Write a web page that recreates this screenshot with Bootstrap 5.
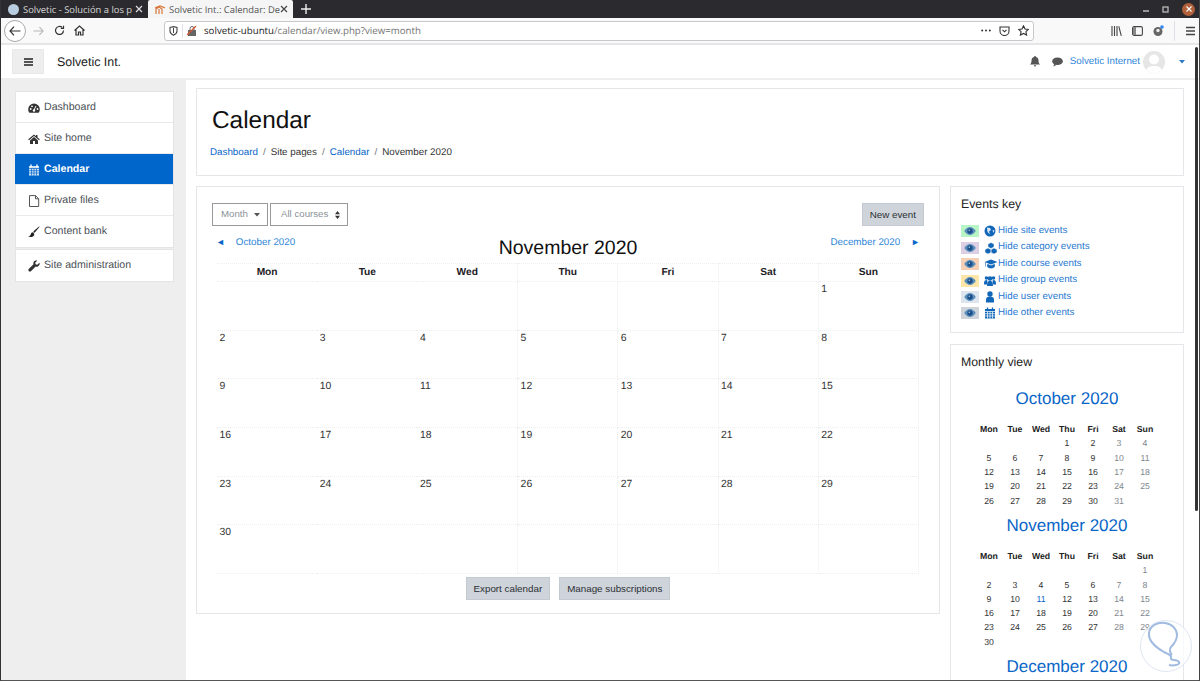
<!DOCTYPE html>
<html lang="en"><head><meta charset="utf-8"><title>Calendar</title>
<link rel="stylesheet" href="https://cdn.jsdelivr.net/npm/bootstrap@5.3.0/dist/css/bootstrap.min.css">
<style>
html,body{height:100%;overflow:hidden}
body{font-family:"Liberation Sans",Arial,sans-serif;font-size:10.6px;color:#1d2125;background:#fff;border-left:1px solid #333;border-bottom:1px solid #555;text-rendering:geometricPrecision}
a{color:#0a66c8;text-decoration:none}
.tabbar{height:18px;background:#2b2a2e;color:#d8d8d8;font:9.4px "Open Sans",sans-serif}
.tabx{width:147px;height:18px;padding:0 5px 0 7px}
.tabx.on{width:145px;background:#f5f5f6;color:#555;border-radius:2px 2px 0 0}
.tabx .ttl{flex:1;overflow:hidden;white-space:nowrap;margin-left:4px}
.globe{width:11px;height:11px;border-radius:50%;background:#b9cde0;flex:none}
.winctl{margin-left:auto;gap:13px;padding-right:5px}
.closer{width:13px;height:13px;border-radius:50%;background:#b0603a;color:#fff}
.toolb{height:27px;background:#f9f9fa;border-bottom:2px solid #e6e6e8;padding:0 4px 0 3px}
.backb{width:22px;height:22px;border:1px solid #aaa;border-radius:50%;background:#fff;flex:none}
.urlb{width:870px;height:20px;margin-left:79px;background:#fff;border:1px solid #c8c8ca;border-radius:3px;font:9.7px "Open Sans",sans-serif;color:#737373;padding:0 4px}
.urlb b{font-weight:500;color:#222}
.topnav{height:35px;background:#fff;border-bottom:2px solid #eee;padding-left:11px;padding-right:15px}
.burger{width:32px;height:25px;background:#eee;border:1px solid #e8e8ec}
.brandx{font-size:12.4px;margin-left:13px;color:#222;padding-top:2px}
.userlink{color:#2f86d8;font-size:9.8px;padding-top:1px}
.avatarx{width:22px;height:22px;border-radius:50%;background:#e6e6e6;margin:0 14px 0 3px;overflow:hidden}
.pagebody{height:636px}
.side{width:185px;flex:none;background:#eee;padding:11px 12px 0 14px}
.menuc{background:#fff;border:1px solid #e4e4e4}
.menuc+.menuc{margin-top:1px}
.menuc a{display:flex;align-items:center;height:31px;padding:1px 0 0 12px;color:#4a4f55;border-bottom:1px solid #eaeaea}
.menuc a:last-child{border-bottom:0;padding-bottom:1px}
.menuc a.on{background:#0066cc;color:#fff;font-weight:700;margin-left:-1px;padding-left:13px}
.menuc svg{width:12px;height:12px;margin-right:4px;flex:none}
.mainarea{flex:1;padding:8px 16px 0 10px;min-width:0}
.boxc{background:#fff;border:1px solid #e4e6e9}
.headc{height:88px;padding:17px 13px 0;margin-bottom:10px}
.headc h1{font-size:24.4px;line-height:29px;font-weight:400;margin:0 0 0 2px;color:#111}
.crumbs{margin-top:11px;font-size:9.8px;line-height:14px;color:#333}
.crumbs i{font-style:normal;color:#6c757d;margin:0 5px}
.colsx{gap:10px;align-items:flex-start}
.calc{width:744px;height:428px;padding:16px 15px 0 15px;flex:none}
.selx{height:23px;border:1px solid #999;color:#8b9298;background:#fff;padding:0 7px 0 8px;margin-right:2px;font-size:9.7px;border-radius:0}
.btnx{background:#ced4da;color:#2b2f33;border:0;border-radius:0;font-size:9.8px;padding:0 8px;height:23px;line-height:23px;box-shadow:inset 0 0 0 1px #c3cad1}
.navrow{height:37px}
.navrow a{font-size:9.8px;margin-top:10px;color:#2f86d8;flex:0 0 200px}
.navrow h2{flex:1;text-align:center;font-size:19.5px;font-weight:400;margin:10px 0 0;line-height:25px;color:#111}
.tri{color:#0a66c8;font-size:9px}
table.gridx{width:702px;margin-left:5px;table-layout:fixed;border-collapse:collapse}
table.gridx th{height:18px;text-align:center;font-size:10.2px;border:1px dotted #eceef0;padding:0;color:#1d2125}
table.gridx td{height:48.7px;vertical-align:top;padding:1px 2.5px 0;border:1px dotted #eceef0;font-size:10.4px;line-height:14px;color:#333}
table.gridx th:nth-child(-n+3),table.gridx td:nth-child(-n+3){border-left:0;border-right:0}
.footb{gap:9px;margin-top:3px}
.sidec{width:234px;flex:none}
.keyc{height:147px;padding:9px 10px 0;margin-bottom:11px}
.keyc h5,.monc h5{font-size:12.3px;font-weight:400;line-height:16px;margin:0;color:#222}
.keyrow{height:16.45px;display:flex;align-items:center;font-size:9.75px}
.keyrow a{color:#1f78d1}
.swat{width:18px;height:12px;display:flex;align-items:center;justify-content:center;margin-right:5px;flex:none}
.icbox{width:14px;flex:none;display:flex;align-items:center}
.icbox svg{width:12px;height:12px}
.icbox svg.wide{width:14px}
.monc{height:400px;padding:9px 10px 0;overflow:hidden}
.monc .mt{font-size:17px;line-height:20px;text-align:center;color:#0a66c8;margin:0;font-weight:400;width:212px}
table.minix{width:182px;margin-left:15px;table-layout:fixed;border-collapse:collapse;margin-top:13px;margin-bottom:8px}
table.minix th,table.minix td{height:14.3px;padding:0;text-align:center;font-size:8.7px;line-height:14px;color:#333}
table.minix th{font-weight:700;color:#222}
table.minix td.we{color:#7f878e}
table.minix td.ev{color:#0a66c8}
.sbar{position:absolute;left:1195px;top:47px;width:3px;height:464px;background:#333;border-radius:2px}
.rimr{position:absolute;right:0;top:0;width:1px;height:681px;background:#444}
.wmark{position:absolute;left:1139px;top:619px;width:54px;height:54px}
</style></head><body>

<svg width="0" height="0" class="position-absolute"><defs>
<symbol id="eyeg" viewBox="0 0 12 8"><path d="M.2 4C2 1.300 4 0 6 0s4 1.300 5.800 4C10 6.700 8 8 6 8S2 6.700.2 4z" fill="#5a8fbd"/><circle cx="6" cy="4" r="2.700" fill="#1d4f88"/><circle cx="5.300" cy="3.300" r=".8" fill="#a9cbe6"/></symbol>
</defs></svg>

<div class="tabbar d-flex align-items-center">
  <div class="tabx d-flex align-items-center"><span class="globe"></span><span class="ttl">Solvetic - Solución a los p</span><svg width="8" height="8" viewBox="0 0 8 8"><path d="M1 1l6 6M7 1L1 7" stroke="#ddd" stroke-width="1.2"/></svg></div>
  <div class="tabx on d-flex align-items-center"><svg width="10" height="9" viewBox="0 0 10 9"><path d="M1 9V4l3-2 3 2v5M4 9V4M0 3l5-2 5 2" fill="none" stroke="#d9773a" stroke-width="1.2"/></svg><span class="ttl">Solvetic Int.: Calendar: De</span><svg width="8" height="8" viewBox="0 0 8 8"><path d="M1 1l6 6M7 1L1 7" stroke="#444" stroke-width="1.2"/></svg></div>
  <svg class="ms-2" width="10" height="10" viewBox="0 0 10 10"><path d="M5 0v10M0 5h10" stroke="#eee" stroke-width="1.4"/></svg>
  <div class="winctl d-flex align-items-center">
    <svg width="6" height="6" viewBox="0 0 6 6"><path d="M0 5h6" stroke="#bbb" stroke-width="1.5"/></svg>
    <svg width="7" height="7" viewBox="0 0 7 7"><rect x="1" y="1" width="5" height="5" fill="none" stroke="#bbb" stroke-width="1.3"/></svg>
    <span class="closer d-flex align-items-center justify-content-center"><svg width="6" height="6" viewBox="0 0 6 6"><path d="M.5.5l5 5M5.500.5l-5 5" stroke="#fff" stroke-width="1.1"/></svg></span>
  </div>
</div>

<div class="toolb d-flex align-items-center">
  <span class="backb d-flex align-items-center justify-content-center"><svg width="12" height="10" viewBox="0 0 12 10"><path d="M5 .7L1 5l4 4.300M1 5h10.500" fill="none" stroke="#333" stroke-width="1.2"/></svg></span>
  <svg style="margin-left:7px" width="11" height="10" viewBox="0 0 12 10"><path d="M7 .7L11 5 7 9.300M11 5H.5" fill="none" stroke="#b5b5b5" stroke-width="1.2"/></svg>
  <svg style="margin-left:10px" width="11" height="11" viewBox="0 0 11 11"><path d="M9.500 5.500a4 4 0 1 1-1.200-2.900M9.500 .8v2.700H6.800" fill="none" stroke="#333" stroke-width="1.2"/></svg>
  <svg style="margin-left:9px" width="11" height="11" viewBox="0 0 11 11"><path d="M.5 5.500l5-4.500 5 4.500M2 4.500V10h2.500V7h2v3H9V4.500" fill="none" stroke="#333" stroke-width="1.2"/></svg>
  <div class="urlb d-flex align-items-center">
    <svg width="9" height="10" viewBox="0 0 9 10"><path d="M1 1.500L4.500.6 8 1.500v3.500c0 2-1.500 3.400-3.500 4.300C2.500 8.400 1 7 1 5z" fill="none" stroke="#444" stroke-width="1.100"/><path d="M4.500 2v5" stroke="#444"/></svg>
    <span class="border-start" style="height:14px;margin:0 4px"></span>
    <svg width="10" height="10" viewBox="0 0 10 10"><rect x="1" y="4" width="8" height="6" fill="#666"/><path d="M3 4V2.500a2 2 0 0 1 4 0V4" fill="none" stroke="#666"/><path d="M0 9L9 0" stroke="#d9552b" stroke-width="1.300"/></svg>
    <span style="margin-left:7px"><b>solvetic-ubuntu</b>/calendar/view.php?view=month</span>
    <span class="ms-auto d-flex align-items-center gap-2">
      <svg width="10" height="3" viewBox="0 0 10 3"><g fill="#333"><circle cx="1.200" cy="1.500" r="1"/><circle cx="5" cy="1.500" r="1"/><circle cx="8.800" cy="1.500" r="1"/></g></svg>
      <svg width="11" height="10" viewBox="0 0 11 10"><path d="M1 1h9v4a4.500 4.500 0 0 1-9 0zM3.500 3.800l2 2 2-2" fill="none" stroke="#333" stroke-width="1.100"/></svg>
      <svg width="11" height="11" viewBox="0 0 11 11"><path d="M5.500.8l1.500 3.200 3.400.4-2.500 2.300.7 3.400-3.100-1.700-3.100 1.700.7-3.400L.6 4.400 4 4z" fill="none" stroke="#333" stroke-width="1.100"/></svg>
    </span>
  </div>
  <div class="ms-auto d-flex align-items-center" style="gap:10px">
    <svg width="11" height="10" viewBox="0 0 11 10"><path d="M1 0v10M3.500 0v10M6 0v10M7.800.3l2.500 9.500" stroke="#444" stroke-width="1.100"/></svg>
    <svg width="11" height="10" viewBox="0 0 11 10"><rect x=".6" y=".6" width="9.800" height="8.800" rx="1.500" fill="none" stroke="#444" stroke-width="1.100"/><rect x="1" y="1" width="3" height="8" fill="#888"/></svg>
    <svg width="11" height="12" viewBox="0 0 11 12"><circle cx="5" cy="6.500" r="4.500" fill="#666"/><circle cx="5" cy="5.500" r="1.700" fill="#eee"/><circle cx="9" cy="2" r="1.800" fill="#2f86f0"/></svg>
    <span class="border-start" style="height:20px"></span>
    <svg width="11" height="10" viewBox="0 0 11 10"><path d="M1 1.500h9M1 5h9M1 8.500h9" stroke="#444" stroke-width="1.300"/></svg>
  </div>
</div>

<nav class="topnav d-flex align-items-center">
  <span class="burger d-flex align-items-center justify-content-center"><svg width="9" height="8" viewBox="0 0 9 8"><path d="M0 1h9M0 4h9M0 7h9" stroke="#222" stroke-width="1.400"/></svg></span>
  <span class="brandx">Solvetic Int.</span>
  <span class="ms-auto d-flex align-items-center">
    <svg width="10" height="11" viewBox="0 0 10 11"><path d="M5 0a1 1 0 0 1 1 1c2 .5 2.500 2 2.500 3.500 0 2 .5 3 1.500 4H0c1-1 1.500-2 1.500-4C1.500 3 2 1.500 4 1a1 1 0 0 1 1-1zM3.800 9.300h2.400a1.200 1.200 0 0 1-2.400 0z" fill="#555"/></svg>
    <svg style="margin-left:12px" width="11" height="10" viewBox="0 0 11 10"><ellipse cx="5.500" cy="4.300" rx="5.300" ry="3.800" fill="#555"/><path d="M2 7l-.5 2.500L5 7.800z" fill="#555"/></svg>
    <a class="userlink" href="#" style="margin-left:7px">Solvetic Internet</a>
    <span class="avatarx"><svg width="22" height="22" viewBox="0 0 22 22"><circle cx="11" cy="8.500" r="5" fill="#fff"/><path d="M2 24c0-7 4-9 9-9s9 2 9 9z" fill="#fff"/></svg></span>
    <svg width="6" height="4" viewBox="0 0 6 4"><path d="M0 0h6L3 3.500z" fill="#2f78c8"/></svg>
  </span>
</nav>

<div class="pagebody d-flex">
  <aside class="side">
    <div class="menuc">
      <a href="#"><svg viewBox="0 0 12 12"><path d="M6 1.500a5.800 5.800 0 0 0-5.800 5.700c0 1.500.5 2.800 1.300 3.600h9c.8-.8 1.300-2.100 1.300-3.600A5.800 5.800 0 0 0 6 1.500z" fill="#333"/><path d="M6 8L8 4" stroke="#fff"/><g fill="#fff"><circle cx="2.700" cy="7" r=".9"/><circle cx="4" cy="4.300" r=".9"/><circle cx="9.500" cy="7" r=".9"/><circle cx="6" cy="8.500" r="1.200"/></g></svg>Dashboard</a>
      <a href="#"><svg viewBox="0 0 12 12"><path d="M6 1.500L.2 6.300l.8.900L6 3.100l5 4.100.8-.9-2.300-1.900V2H8v1.200zM2 7.500V11h3V8h2v3h3V7.500L6 4z" fill="#333"/></svg>Site home</a>
      <a href="#" class="on"><svg viewBox="0 0 12 12"><path d="M1 2h10v9.500H1z" fill="#cfe2f5"/><path d="M3 .5v2.800M9 .5v2.800" stroke="#fff" stroke-width="1.400"/><path d="M1 4.500h10M1 6.700h10M1 9h10M3.500 4.500v7M6 4.500v7M8.500 4.500v7" stroke="#0066cc" stroke-width=".7"/></svg>Calendar</a>
      <a href="#"><svg viewBox="0 0 12 12"><path d="M1.500.6h6L10.700 3.800v7.700H1.500zM7.500.6v3.200h3.200" fill="none" stroke="#555" stroke-width="1"/></svg>Private files</a>
      <a href="#"><svg viewBox="0 0 12 12"><path d="M11.800.3c-1.200.5-5.300 4-6.600 5.600l1.100 1.100C7.700 5.700 11.300 1.500 11.800.3zM4.500 6.200C2.800 6.500 3 8.500 2.300 9.300 1.800 10 .8 10 .2 10.300c1.800 1.300 5 1.200 6-1.300.4-1.100-.5-2.300-1.700-2.800z" fill="#222"/></svg>Content bank</a>
    </div>
    <div class="menuc">
      <a href="#"><svg viewBox="0 0 12 12"><path d="M11.300 2.800L9.300 4.700 7.600 4.300 7.200 2.700 9.200.7C7.700.2 6 .8 5.500 2.200c-.3.800-.2 1.500 0 2.100L.7 9.100c-.5.500-.5 1.300 0 1.800l.4.400c.5.500 1.300.5 1.800 0l4.800-4.800c.6.200 1.400.3 2.100 0 1.500-.5 2.200-2.200 1.700-3.700z" fill="#333"/></svg>Site administration</a>
    </div>
  </aside>

  <main class="mainarea">
    <div class="boxc headc">
      <h1>Calendar</h1>
      <div class="crumbs"><a href="#">Dashboard</a><i>/</i>Site pages<i>/</i><a href="#">Calendar</a><i>/</i>November 2020</div>
    </div>
    <div class="colsx d-flex">
      <section class="boxc calc">
        <div class="d-flex">
          <button class="selx d-flex align-items-center" type="button">Month<svg style="margin-left:6px" width="6" height="4" viewBox="0 0 6 4"><path d="M0 0h6L3 3.500z" fill="#555"/></svg></button>
          <button class="selx d-flex align-items-center" type="button" style="padding-left:10px">All courses<svg style="margin-left:7px" width="5" height="8" viewBox="0 0 5 8"><path d="M0 3.300h5L2.500 0zM0 4.700h5L2.500 8z" fill="#333"/></svg></button>
          <button class="btnx ms-auto" type="button">New event</button>
        </div>
        <div class="navrow d-flex align-items-start">
          <a href="#" class="ps-1"><span class="tri">◄</span>&nbsp;&nbsp;&nbsp;&nbsp;October 2020</a>
          <h2>November 2020</h2>
          <a href="#" class="pe-1 text-end">December 2020&nbsp;&nbsp;&nbsp;&nbsp;<span class="tri">►</span></a>
        </div>
        <table class="gridx">
          <tr><th>Mon</th><th>Tue</th><th>Wed</th><th>Thu</th><th>Fri</th><th>Sat</th><th>Sun</th></tr>
          <tr><td></td><td></td><td></td><td></td><td></td><td></td><td>1</td></tr>
          <tr><td>2</td><td>3</td><td>4</td><td>5</td><td>6</td><td>7</td><td>8</td></tr>
          <tr><td>9</td><td>10</td><td>11</td><td>12</td><td>13</td><td>14</td><td>15</td></tr>
          <tr><td>16</td><td>17</td><td>18</td><td>19</td><td>20</td><td>21</td><td>22</td></tr>
          <tr><td>23</td><td>24</td><td>25</td><td>26</td><td>27</td><td>28</td><td>29</td></tr>
          <tr><td>30</td><td></td><td></td><td></td><td></td><td></td><td></td></tr>
        </table>
        <div class="footb d-flex justify-content-center">
          <button class="btnx" type="button">Export calendar</button>
          <button class="btnx" type="button">Manage subscriptions</button>
        </div>
      </section>

      <div class="sidec">
        <section class="boxc keyc">
          <h5>Events key</h5>
          <div style="margin-top:11px">
            <div class="keyrow"><span class="swat" style="background:#b9f5c4"><svg width="12" height="8"><use href="#eyeg"/></svg></span><span class="icbox"><svg viewBox="0 0 12 12"><circle cx="6" cy="6" r="5.500" fill="#1266b8"/><path d="M3 2.500l3 .5 1 2-2 1.500 1 3L3.500 7zM8.500 5l2 .5-1 2.500z" fill="#d7e8f7"/></svg></span><a href="#">Hide site events</a></div>
            <div class="keyrow"><span class="swat" style="background:#dccfe3"><svg width="12" height="8"><use href="#eyeg"/></svg></span><span class="icbox"><svg class="wide" viewBox="0 0 13 12"><path d="M6.500.5l3 1.500v3l-3 1.500-3-1.500V2zM3.500 6l3 1.500v3L3.500 12 .5 10.500v-3zM9.500 6l3 1.500v3l-3 1.500-3-1.500v-3z" fill="#1266b8" stroke="#fff" stroke-width=".5"/></svg></span><a href="#">Hide category events</a></div>
            <div class="keyrow"><span class="swat" style="background:#f6cfb4"><svg width="12" height="8"><use href="#eyeg"/></svg></span><span class="icbox"><svg class="wide" viewBox="0 0 13 12"><path d="M6.500 1.500L13 4 6.500 6.500 0 4z" fill="#1266b8"/><path d="M3 6.300v2.500c1 1 2.300 1.300 3.500 1.300s2.500-.3 3.500-1.300V6.300L6.500 7.700zM1 4.500v4" fill="#1266b8" stroke="#1266b8" stroke-width=".6"/></svg></span><a href="#">Hide course events</a></div>
            <div class="keyrow"><span class="swat" style="background:#fde6a8"><svg width="12" height="8"><use href="#eyeg"/></svg></span><span class="icbox"><svg viewBox="0 0 12 12"><g fill="#1266b8"><circle cx="2.500" cy="3" r="1.800"/><circle cx="9.500" cy="3" r="1.800"/><circle cx="6" cy="3.500" r="2.300"/><path d="M0 8.500c0-2.500 1-3.500 2.500-3.500l1 .7L3 9.500H0zM12 8.500c0-2.500-1-3.500-2.500-3.500l-1 .7L9 9.500h3zM3 11c0-3.500 1.200-5.300 3-5.300S9 7.500 9 11z"/></g></svg></span><a href="#">Hide group events</a></div>
            <div class="keyrow"><span class="swat" style="background:#dde6ee"><svg width="12" height="8"><use href="#eyeg"/></svg></span><span class="icbox"><svg viewBox="0 0 12 12"><g fill="#1266b8"><circle cx="6" cy="3" r="2.700"/><path d="M2 11.500V8.500C2 6.500 3.500 5.500 6 5.500s4 1 4 3v3z"/></g></svg></span><a href="#">Hide user events</a></div>
            <div class="keyrow"><span class="swat" style="background:#ced4da"><svg width="12" height="8"><use href="#eyeg"/></svg></span><span class="icbox"><svg viewBox="0 0 12 12"><rect x="1" y="2" width="10" height="9.500" fill="#1266b8"/><path d="M3.500.5v2.500M8.500.5v2.500" stroke="#1266b8" stroke-width="1.300"/><path d="M1 4.500h10M1 6.700h10M1 9h10M3.500 4.500v7M6 4.500v7M8.500 4.500v7" stroke="#fff" stroke-width=".7"/></svg></span><a href="#">Hide other events</a></div>
          </div>
        </section>
        <section class="boxc monc">
          <h5>Monthly view</h5>
          <div style="height:19px"></div>
          <div class="mt">October 2020</div>
          <table class="minix">
            <tr><th>Mon</th><th>Tue</th><th>Wed</th><th>Thu</th><th>Fri</th><th>Sat</th><th>Sun</th></tr>
            <tr><td></td><td></td><td></td><td>1</td><td>2</td><td class="we">3</td><td class="we">4</td></tr>
            <tr><td>5</td><td>6</td><td>7</td><td>8</td><td>9</td><td class="we">10</td><td class="we">11</td></tr>
            <tr><td>12</td><td>13</td><td>14</td><td>15</td><td>16</td><td class="we">17</td><td class="we">18</td></tr>
            <tr><td>19</td><td>20</td><td>21</td><td>22</td><td>23</td><td class="we">24</td><td class="we">25</td></tr>
            <tr><td>26</td><td>27</td><td>28</td><td>29</td><td>30</td><td class="we">31</td><td></td></tr>
          </table>
          <div class="mt">November 2020</div>
          <table class="minix">
            <tr><th>Mon</th><th>Tue</th><th>Wed</th><th>Thu</th><th>Fri</th><th>Sat</th><th>Sun</th></tr>
            <tr><td></td><td></td><td></td><td></td><td></td><td></td><td class="we">1</td></tr>
            <tr><td>2</td><td>3</td><td>4</td><td>5</td><td>6</td><td class="we">7</td><td class="we">8</td></tr>
            <tr><td>9</td><td>10</td><td class="ev">11</td><td>12</td><td>13</td><td class="we">14</td><td class="we">15</td></tr>
            <tr><td>16</td><td>17</td><td>18</td><td>19</td><td>20</td><td class="we">21</td><td class="we">22</td></tr>
            <tr><td>23</td><td>24</td><td>25</td><td>26</td><td>27</td><td class="we">28</td><td class="we">29</td></tr>
            <tr><td>30</td><td></td><td></td><td></td><td></td><td></td><td></td></tr>
          </table>
          <div class="mt">December 2020</div>
        </section>
      </div>
    </div>
  </main>
</div>

<div class="sbar"></div>
<div class="rimr"></div>
<svg class="wmark" viewBox="0 0 54 54"><circle cx="27" cy="27" r="25.500" fill="#fff" fill-opacity=".7" stroke="#dfe6f3"/><path d="M30 46c4 1 12 0 10-3s-9-1-8-4-3-4-7-6C18 29 9 23 10 14 11 6 19 3 26 4c7 1 12 6 12 12 0 5-3 9-6 12-2 2-1 6 1 8" fill="none" stroke="#8aaad8" stroke-width="2" stroke-opacity=".8"/></svg>

<script src="https://cdn.jsdelivr.net/npm/bootstrap@5.3.0/dist/js/bootstrap.bundle.min.js"></script>
</body></html>
